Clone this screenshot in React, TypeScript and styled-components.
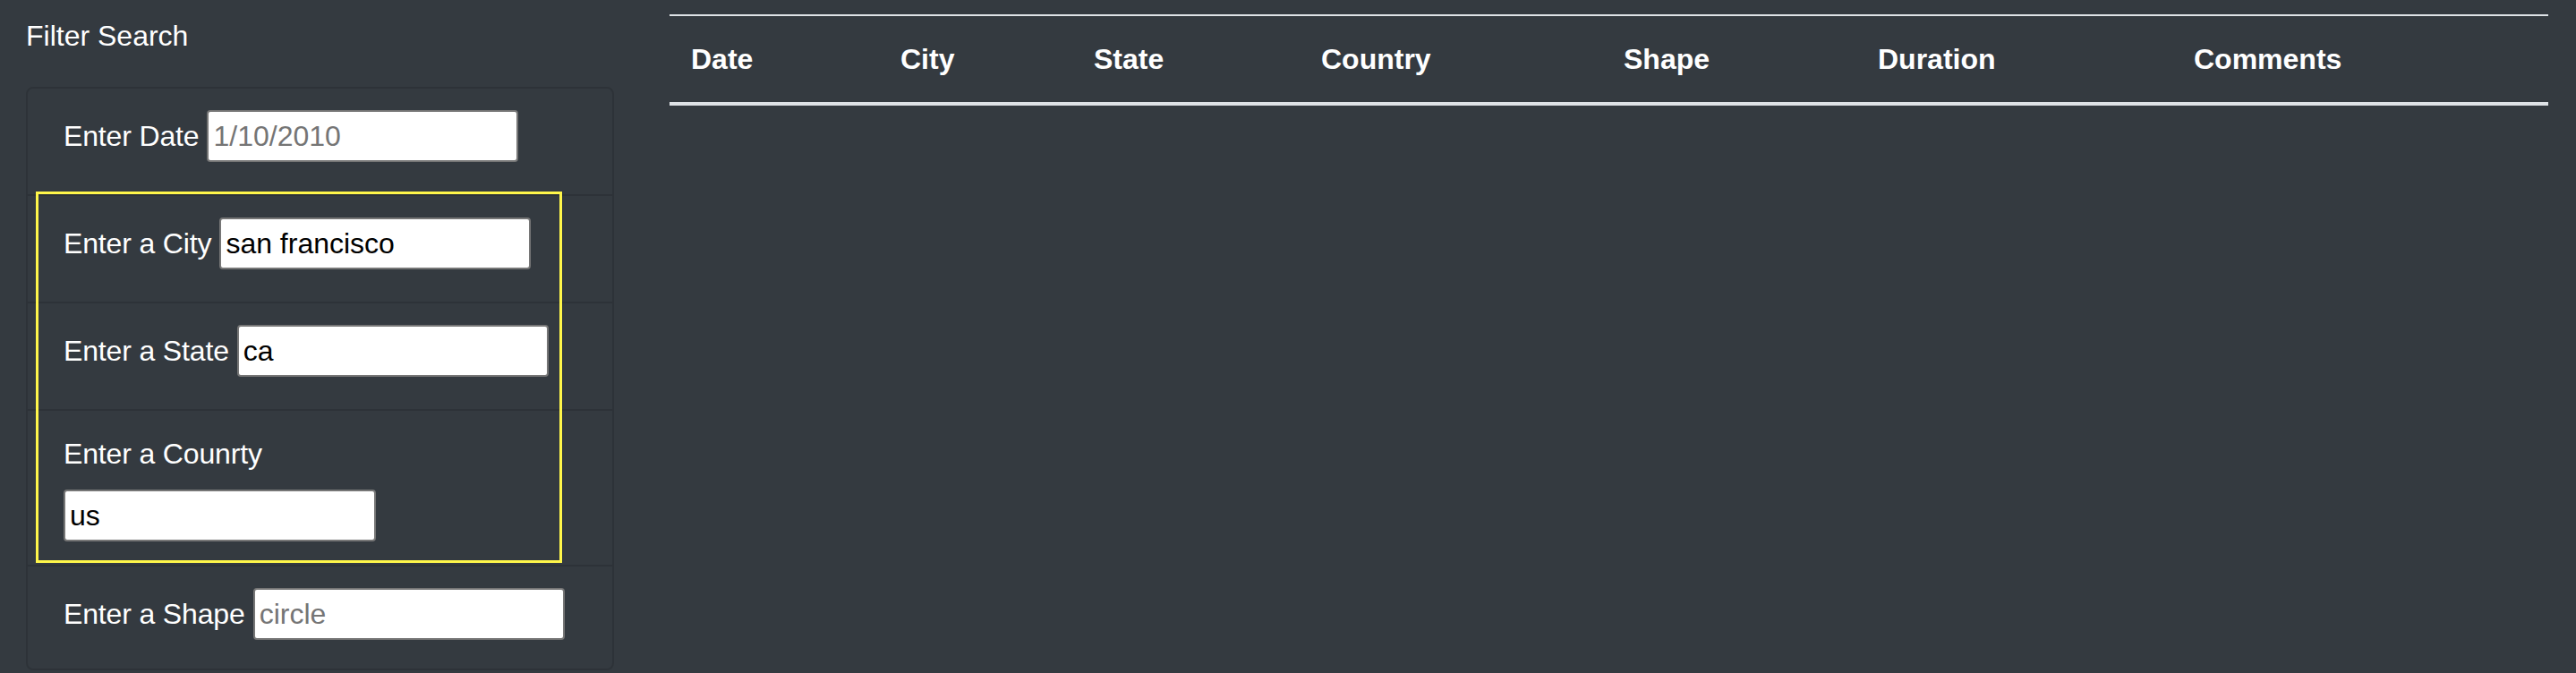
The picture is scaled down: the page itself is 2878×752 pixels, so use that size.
import React from 'react'
import styled, { createGlobalStyle } from 'styled-components'

const GlobalStyle = createGlobalStyle`
  html, body {
    margin: 0;
    padding: 0;
    overflow: hidden;
    background: #343a40;
  }
  body {
    font-family: "Liberation Sans", Arial, Helvetica, sans-serif;
    font-size: 32px;
    line-height: 48px;
    color: #ffffff;
  }
`

const Page = styled.div`
  display: grid;
  grid-template-columns: 657px 1fr;
  column-gap: 62px;
  padding: 0 31px 0 29px;
  min-height: 752px;
  background: #343a40;
`

const Sidebar = styled.div`
  display: flex;
  flex-direction: column;
`

const Title = styled.div`
  margin-top: 16px;
  margin-bottom: 33px;
  font-size: 32px;
  line-height: 48px;
`

const Card = styled.div`
  border: 2px solid rgba(0, 0, 0, 0.125);
  border-radius: 8px;
  display: flex;
  flex-direction: column;
`

const Highlight = styled.div`
  position: relative;

  &::after {
    content: '';
    position: absolute;
    top: -5px;
    bottom: 4px;
    left: 9px;
    width: 588px;
    box-sizing: border-box;
    border: 3px solid #fff64a;
    pointer-events: none;
  }
`

const Row = styled.div<{ stacked?: boolean; last?: boolean }>`
  display: flex;
  flex-direction: ${p => (p.stacked ? 'column' : 'row')};
  align-items: ${p => (p.stacked ? 'flex-start' : 'baseline')};
  gap: ${p => (p.stacked ? '16px' : '9px')};
  padding: 24px 40px ${p => (p.stacked ? '26px' : p.last ? '32px' : '36px')};
  border-bottom: ${p => (p.last ? 'none' : '2px solid rgba(0, 0, 0, 0.125)')};
`

const Label = styled.label`
  font-size: 32px;
  line-height: 48px;
  letter-spacing: -0.15px;
  color: #ffffff;
  white-space: nowrap;
`

const Field = styled.input`
  box-sizing: border-box;
  width: ${p => (p.width ? `${p.width}px` : '348px')};
  height: 58px;
  padding: 0 5px;
  border: 2px solid #767676;
  border-radius: 4px;
  background: #ffffff;
  color: #000000;
  font-family: "Liberation Sans", Arial, Helvetica, sans-serif;
  font-size: 32px;
  outline: none;

  &::placeholder {
    color: #757575;
  }
`

const Main = styled.div`
  padding-top: 16px;
`

const Table = styled.table`
  width: 100%;
  table-layout: fixed;
  border-collapse: separate;
  border-spacing: 0;
  color: #ffffff;
`

const Th = styled.th`
  text-align: left;
  font-weight: 700;
  font-size: 32px;
  line-height: 48px;
  padding: 24px;
  border-top: 2px solid #dee2e6;
  border-bottom: 4px solid #dee2e6;
`

const columns = [
  { name: 'Date', width: 234 },
  { name: 'City', width: 216 },
  { name: 'State', width: 254 },
  { name: 'Country', width: 338 },
  { name: 'Shape', width: 284 },
  { name: 'Duration', width: 353 },
  { name: 'Comments', width: 420 },
]

const App: React.FC = () => {
  return (
    <>
      <GlobalStyle />
      <Page>
        <Sidebar>
          <Title>Filter Search</Title>
          <Card>
            <Row>
              <Label htmlFor='datetime'>Enter Date</Label>
              <Field id='datetime' type='text' placeholder='1/10/2010' />
            </Row>
            <Highlight>
              <Row>
                <Label htmlFor='city'>Enter a City</Label>
                <Field id='city' type='text' defaultValue='san francisco' />
              </Row>
              <Row>
                <Label htmlFor='state'>Enter a State</Label>
                <Field id='state' type='text' defaultValue='ca' />
              </Row>
              <Row stacked>
                <Label htmlFor='country'>Enter a Counrty</Label>
                <Field id='country' type='text' defaultValue='us' width={349} />
              </Row>
            </Highlight>
            <Row last>
              <Label htmlFor='shape'>Enter a Shape</Label>
              <Field id='shape' type='text' placeholder='circle' />
            </Row>
          </Card>
        </Sidebar>
        <Main>
          <Table>
            <colgroup>
              {columns.map(c => (
                <col key={c.name} style={{ width: c.width }} />
              ))}
            </colgroup>
            <thead>
              <tr>
                {columns.map(c => (
                  <Th key={c.name}>{c.name}</Th>
                ))}
              </tr>
            </thead>
            <tbody />
          </Table>
        </Main>
      </Page>
    </>
  )
}

export default App
